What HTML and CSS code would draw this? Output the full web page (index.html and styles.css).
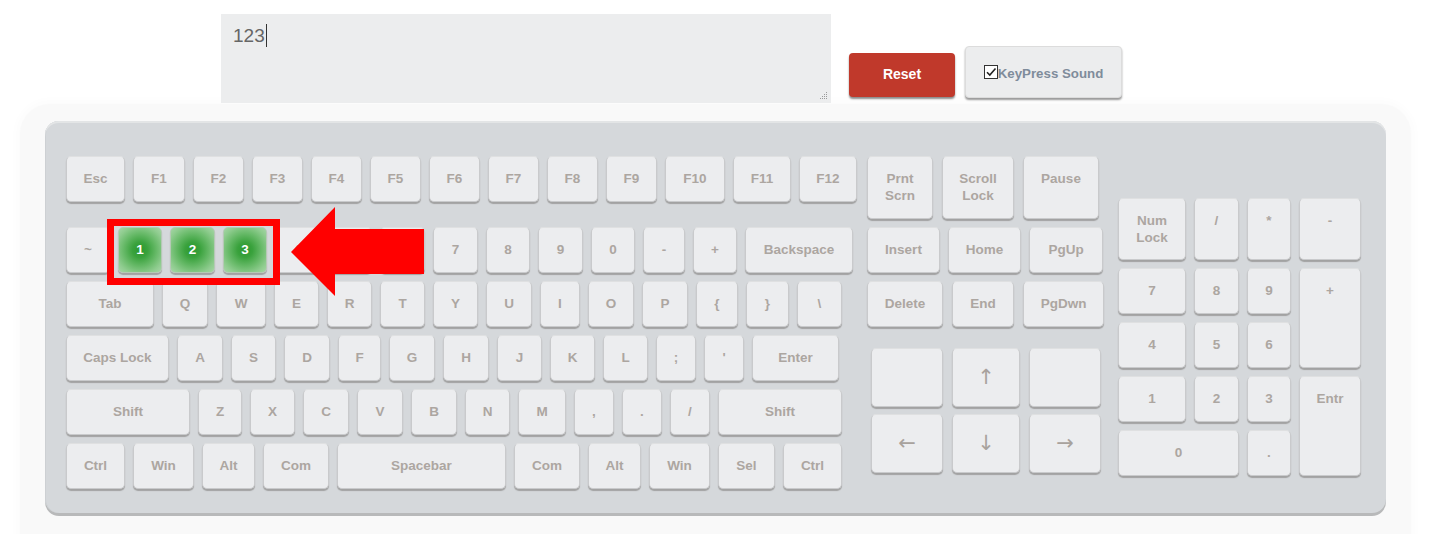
FILE: index.html
```html
<!DOCTYPE html>
<html lang="en">
<head>
<meta charset="utf-8">
<title>Virtual Keyboard</title>
<link rel="stylesheet" href="styles.css">
</head>
<body>
<div class="top">
  <div class="output">123<span class="caret"></span>
    <svg class="grip" width="8" height="8" viewBox="0 0 8 8"><g fill="#9a9a9a"><rect x="6" y="0" width="1" height="1"/><rect x="4" y="2" width="1" height="1"/><rect x="6" y="2" width="1" height="1"/><rect x="2" y="4" width="1" height="1"/><rect x="4" y="4" width="1" height="1"/><rect x="6" y="4" width="1" height="1"/><rect x="0" y="6" width="1" height="1"/><rect x="2" y="6" width="1" height="1"/><rect x="4" y="6" width="1" height="1"/><rect x="6" y="6" width="1" height="1"/></g></svg>
  </div>
  <button class="btn reset">Reset</button>
  <button class="btn sound"><span class="check"><svg width="12" height="12" viewBox="0 0 12 12"><path d="M2 6.2 L4.8 9 L10.5 2.5" fill="none" stroke="#222" stroke-width="1.6"/></svg></span>KeyPress Sound</button>
</div>

<div class="frame">
  <div class="keyboard">
    <div class="main">
      <div class="row fn-row">
        <div class="key k59">Esc</div>
        <div class="key k52">F1</div>
        <div class="key k51">F2</div>
        <div class="key k51">F3</div>
        <div class="key k51">F4</div>
        <div class="key k51">F5</div>
        <div class="key k51">F6</div>
        <div class="key k51">F7</div>
        <div class="key k51">F8</div>
        <div class="key k51">F9</div>
        <div class="key k60">F10</div>
        <div class="key k58">F11</div>
        <div class="key k58">F12</div>
      </div>
      <div class="row">
        <div class="key k44">~</div>
        <div class="key k44 active">1</div>
        <div class="key active">2</div>
        <div class="key k44 active">3</div>
        <div class="key k44">4</div>
        <div class="key">5</div>
        <div class="key">6</div>
        <div class="key">7</div>
        <div class="key k44">8</div>
        <div class="key">9</div>
        <div class="key k44">0</div>
        <div class="key k42">-</div>
        <div class="key k44">+</div>
        <div class="key k108">Backspace</div>
      </div>
      <div class="row">
        <div class="key k88">Tab</div>
        <div class="key k46">Q</div>
        <div class="key k50">W</div>
        <div class="key">E</div>
        <div class="key">R</div>
        <div class="key">T</div>
        <div class="key">Y</div>
        <div class="key k46">U</div>
        <div class="key k40">I</div>
        <div class="key k46">O</div>
        <div class="key k46">P</div>
        <div class="key k42">{</div>
        <div class="key k43">}</div>
        <div class="key">\</div>
      </div>
      <div class="row">
        <div class="key k103">Caps Lock</div>
        <div class="key k46">A</div>
        <div class="key">S</div>
        <div class="key k46">D</div>
        <div class="key k43">F</div>
        <div class="key k46">G</div>
        <div class="key k46">H</div>
        <div class="key">J</div>
        <div class="key">K</div>
        <div class="key">L</div>
        <div class="key k40">;</div>
        <div class="key k40">'</div>
        <div class="key k87">Enter</div>
      </div>
      <div class="row">
        <div class="key k124">Shift</div>
        <div class="key k44">Z</div>
        <div class="key">X</div>
        <div class="key k46">C</div>
        <div class="key k46">V</div>
        <div class="key k46">B</div>
        <div class="key">N</div>
        <div class="key k48">M</div>
        <div class="key k40">,</div>
        <div class="key k40">.</div>
        <div class="key k40">/</div>
        <div class="key k124">Shift</div>
      </div>
      <div class="row">
        <div class="key k59">Ctrl</div>
        <div class="key k61">Win</div>
        <div class="key k53">Alt</div>
        <div class="key k66">Com</div>
        <div class="key k169">Spacebar</div>
        <div class="key k66">Com</div>
        <div class="key k53">Alt</div>
        <div class="key k61">Win</div>
        <div class="key k57">Sel</div>
        <div class="key k59">Ctrl</div>
      </div>
    </div>

    <div class="nav">
      <div class="row wide-gap tall-row">
        <div class="key k66 tall">Prnt<br>Scrn</div>
        <div class="key k72 tall">Scroll<br>Lock</div>
        <div class="key k76 tall">Pause</div>
      </div>
      <div class="row">
        <div class="key k73">Insert</div>
        <div class="key k73">Home</div>
        <div class="key k74">PgUp</div>
      </div>
      <div class="row wide-gap">
        <div class="key k76">Delete</div>
        <div class="key k62">End</div>
        <div class="key k81">PgDwn</div>
      </div>
      <div class="arrows">
        <div class="key arrow k72"></div>
        <div class="key arrow k68">↑</div>
        <div class="key arrow k72"></div>
        <div class="key arrow k72">←</div>
        <div class="key arrow k68">↓</div>
        <div class="key arrow k72">→</div>
      </div>
    </div>

    <div class="numpad">
      <div class="key np">Num<br>Lock</div>
      <div class="key np">/</div>
      <div class="key np">*</div>
      <div class="key np">-</div>
      <div class="key np">7</div>
      <div class="key np">8</div>
      <div class="key np">9</div>
      <div class="key np span-rows">+</div>
      <div class="key np">4</div>
      <div class="key np">5</div>
      <div class="key np">6</div>
      <div class="key np">1</div>
      <div class="key np">2</div>
      <div class="key np">3</div>
      <div class="key np span-rows">Entr</div>
      <div class="key np span-cols">0</div>
      <div class="key np">.</div>
    </div>

    <div class="highlight-box"></div>
    <svg class="pointer" width="133" height="89" viewBox="0 0 133 89"><polygon points="0,45 44,0 44,22 133,22 133,67 44,67 44,89" fill="#ff0000"/></svg>
  </div>
</div>
</body>
</html>
```

FILE: styles.css
```css
* { box-sizing: border-box; }

html, body {
  margin: 0;
  padding: 0;
  background: #ffffff;
  font-family: "Liberation Sans", Arial, sans-serif;
  overflow: hidden;
}

.top {
  display: flex;
  align-items: flex-end;
  padding: 14px 0 0 221px;
  height: 103px;
}

.output {
  position: relative;
  width: 610px;
  height: 89px;
  background: #ecedee;
  padding: 10px 12px;
  font-size: 19px;
  line-height: 22px;
  color: #666666;
}

.caret {
  display: inline-block;
  width: 1px;
  height: 23px;
  background: #333333;
  vertical-align: -5px;
  margin-left: 1px;
}

.grip {
  position: absolute;
  right: 3px;
  bottom: 3px;
}

.btn {
  font-family: "Liberation Sans", Arial, sans-serif;
  font-weight: bold;
  border-radius: 4px;
  cursor: pointer;
  display: flex;
  align-items: center;
  justify-content: center;
  padding: 0;
}

.reset {
  margin: 0 0 6px 18px;
  width: 106px;
  height: 44px;
  background: #c0392b;
  color: #ffffff;
  font-size: 14px;
  border: none;
  box-shadow: 0 2px 2px rgba(0, 0, 0, 0.45);
  padding-bottom: 2px;
}

.sound {
  margin: 0 0 5px 10px;
  width: 157px;
  height: 52px;
  background: #ecedee;
  color: #7f8c9b;
  font-size: 13.3px;
  border: 1px solid #dcdcdc;
  box-shadow: 0 2px 2px rgba(0, 0, 0, 0.4);
  padding-top: 3px;
}

.check {
  display: inline-flex;
  align-items: center;
  justify-content: center;
  width: 14px;
  height: 14px;
  border: 1px solid #333333;
  background: #ffffff;
  margin-top: -4px;
}

.frame {
  margin: 1px 18px 0 20px;
  height: 440px;
  background: #f9f9f9;
  border-radius: 30px 30px 0 0;
  padding: 17px 25px 0 25px;
  box-shadow: 0 0 8px 4px #fcfcfc;
}

.keyboard {
  position: relative;
  display: flex;
  align-items: flex-start;
  width: 1341px;
  height: 392px;
  background: #d5d8db;
  border-radius: 14px;
  padding: 35px 0 0 21px;
  box-shadow: inset 0 2px 0 #e3e5e6, inset 1px 0 0 #cdd0d3, 0 3px 0 #b8b9ba;
}

.main {
  display: flex;
  flex-direction: column;
  gap: 8px;
  width: 792px;
}

.row {
  display: flex;
  gap: 8px;
}

.fn-row { margin-bottom: 17px; }

.key {
  flex: none;
  width: 45px;
  height: 46px;
  background: #ecedef;
  border: 1px solid #c9cacc;
  border-top-color: #dfe0e1;
  border-radius: 5px;
  box-shadow: 0 2px 1px #a2a2a2;
  color: #aca6a1;
  font-size: 13.5px;
  font-weight: bold;
  line-height: 17px;
  text-align: center;
  padding-top: 13px;
}

.key.active {
  background: radial-gradient(circle at 50% 50%, #2a982e 0%, #3aa23d 25%, #68ba69 55%, #8fcc8f 80%, #a6d6a6 100%);
  color: #ffffff;
  border-color: #b5c9b5;
}

.k40 { width: 40px; }
.k42 { width: 42px; }
.k43 { width: 43px; }
.k44 { width: 44px; }
.k46 { width: 46px; }
.k48 { width: 48px; }
.k50 { width: 50px; }
.k51 { width: 51px; }
.k52 { width: 52px; }
.k53 { width: 53px; }
.k57 { width: 57px; }
.k58 { width: 58px; }
.k59 { width: 59px; }
.k60 { width: 60px; }
.k61 { width: 61px; }
.k62 { width: 62px; }
.k66 { width: 66px; }
.k68 { width: 68px; }
.k72 { width: 72px; }
.k73 { width: 73px; }
.k74 { width: 74px; }
.k76 { width: 76px; }
.k81 { width: 81px; }
.k87 { width: 87px; }
.k88 { width: 88px; }
.k103 { width: 103px; }
.k108 { width: 108px; }
.k124 { width: 124px; }
.k169 { width: 169px; }

.nav {
  display: flex;
  flex-direction: column;
  gap: 8px;
  width: 237px;
  margin-left: 9px;
}

.wide-gap { gap: 9px; }

.key.tall { height: 63px; }

.arrows {
  display: grid;
  grid-template-columns: 72px 68px 72px;
  grid-auto-rows: 59px;
  column-gap: 9px;
  row-gap: 7px;
  margin: 13px 0 0 4px;
}

.key.arrow {
  width: auto;
  height: 59px;
  padding-top: 0;
  display: flex;
  align-items: center;
  justify-content: center;
  font-family: "DejaVu Sans", sans-serif;
  font-weight: normal;
  font-size: 21px;
  color: #a8a29d;
}

.numpad {
  display: grid;
  grid-template-columns: 68px 45px 44px 62px;
  grid-template-rows: 62px 46px 46px 46px 46px;
  column-gap: 8px;
  row-gap: 8px;
  margin: 42px 0 0 14px;
}

.key.np {
  width: auto;
  height: auto;
}

.span-rows { grid-row: span 2; }
.span-cols { grid-column: span 2; }

.highlight-box {
  position: absolute;
  left: 62px;
  top: 98px;
  width: 173px;
  height: 66px;
  border: 7px solid #ff0000;
}

.pointer {
  position: absolute;
  left: 246px;
  top: 86px;
}
```
